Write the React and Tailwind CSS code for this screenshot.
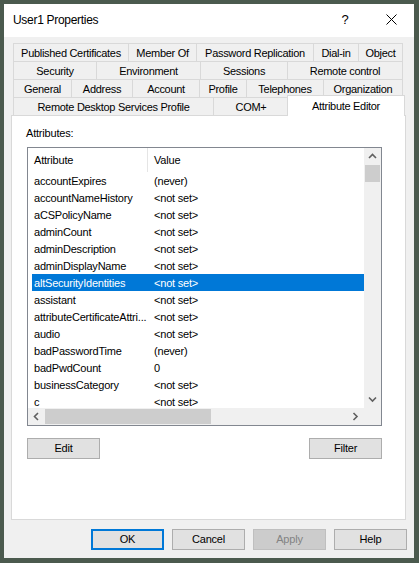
import React from "react";

const font = { fontFamily: '"Liberation Sans", Arial, sans-serif' };

const tabRows = [
    [
        { label: "Published Certificates", w: "w-[116px]" },
        { label: "Member Of", w: "w-[68px]" },
        { label: "Password Replication", w: "w-[117px]" },
        { label: "Dial-in", w: "w-[45px]" },
        { label: "Object", w: "w-[44px]" },
    ],
    [
        { label: "Security", w: "w-[84px]" },
        { label: "Environment", w: "w-[104px]" },
        { label: "Sessions", w: "w-[87px]" },
        { label: "Remote control", w: "w-[115px]" },
    ],
    [
        { label: "General", w: "w-[59px]" },
        { label: "Address", w: "w-[61px]" },
        { label: "Account", w: "w-[67px]" },
        { label: "Profile", w: "w-[47px]" },
        { label: "Telephones", w: "w-[77px]" },
        { label: "Organization", w: "w-[79px]" },
    ],
];

const attributes = [
    ["accountExpires", "(never)"],
    ["accountNameHistory", "<not set>"],
    ["aCSPolicyName", "<not set>"],
    ["adminCount", "<not set>"],
    ["adminDescription", "<not set>"],
    ["adminDisplayName", "<not set>"],
    ["altSecurityIdentities", "<not set>"],
    ["assistant", "<not set>"],
    ["attributeCertificateAttri...", "<not set>"],
    ["audio", "<not set>"],
    ["badPasswordTime", "(never)"],
    ["badPwdCount", "0"],
    ["businessCategory", "<not set>"],
    ["c", "<not set>"],
];

function Chevron({ dir }) {
    const d = {
        up: "M1 5 L4.5 1.5 L8 5",
        down: "M1 1.5 L4.5 5 L8 1.5",
        left: "M5 1 L1.5 4.5 L5 8",
        right: "M1.5 1 L5 4.5 L1.5 8",
    }[dir];
    const vertical = dir === "up" || dir === "down";
    return (
        <svg width={vertical ? 9 : 7} height={vertical ? 7 : 9} viewBox={vertical ? "0 0 9 7" : "0 0 7 9"}>
            <path d={d} fill="none" stroke="#606060" strokeWidth="1.6" />
        </svg>
    );
}

function Btn({ children, variant }) {
    let cls = "bg-[#e1e1e1] border border-[#adadad] text-black";
    if (variant === "default") cls = "bg-[#e1e1e1] border-2 border-[#0078d7] text-black";
    if (variant === "disabled") cls = "bg-[#cccccc] border border-[#bfbfbf] text-[#838383]";
    return (
        <div className={`w-[73px] h-[21px] flex items-center justify-center text-[11px] tracking-[-0.2px] ${cls}`}>
            {children}
        </div>
    );
}

export default function App() {
    return (
        <div className="w-[419px] h-[563px] bg-[#4b5a4e] pl-[4px] pt-[4px] pr-[5px] pb-[5px]" style={font}>
            <div className="w-[410px] h-[554px] bg-[#f0f0f0] flex flex-col">

                {/* title bar */}
                <div className="h-[33px] bg-white flex items-center pb-[2px]">
                    <span className="flex-1 pl-[9px] text-[12px] tracking-[-0.3px] text-black">User1 Properties</span>
                    <span className="w-[46px] text-center text-[13px] text-black">?</span>
                    <span className="w-[46px] flex justify-center">
                        <svg width="11" height="11" viewBox="0 0 11 11">
                            <path d="M0.5 0.5 L10.5 10.5 M10.5 0.5 L0.5 10.5" stroke="#000" strokeWidth="1" />
                        </svg>
                    </span>
                </div>

                {/* tabs */}
                <div className="mt-[6px] ml-[9px] flex flex-col text-[11px] tracking-[-0.3px] text-black">
                    {tabRows.map((row, i) => (
                        <div key={i} className="flex h-[18px]">
                            {row.map((t) => (
                                <div
                                    key={t.label}
                                    className={`${t.w} flex items-center justify-center pt-px border-t border-r border-[#d9d9d9] first:border-l whitespace-nowrap`}
                                >
                                    {t.label}
                                </div>
                            ))}
                        </div>
                    ))}
                    <div className="flex h-[18px] items-end">
                        <div className="w-[201px] h-[18px] flex items-center justify-center pt-px border-t border-l border-r border-[#d9d9d9]">
                            Remote Desktop Services Profile
                        </div>
                        <div className="w-[75px] h-[18px] flex items-center justify-center pt-px border-t border-r border-[#d9d9d9]">
                            COM+
                        </div>
                        <div className="relative z-10 w-[118px] h-[21px] -ml-[2px] -mb-px bg-white flex items-start pt-[2px] justify-center border-t border-l border-r border-[#d9d9d9]">
                            Attribute Editor
                        </div>
                    </div>
                </div>

                {/* tab page */}
                <div className="ml-[7px] w-[395px] h-[405px] bg-white border border-[#d9d9d9] pl-[15px] pt-[10px] flex flex-col text-[11px] tracking-[-0.2px] text-black">
                    <div className="h-[14px] flex items-center -ml-px">Attributes:</div>

                    <div className="mt-[7px] w-[355px] h-[279px] border border-[#828790] flex flex-col">
                        <div className="flex h-[260px]">
                            <div className="w-[336px] overflow-hidden">
                                <div className="h-[24px] flex">
                                    <div className="w-[120px] pl-[6px] pt-px flex items-center border-r border-[#e5e5e5]">Attribute</div>
                                    <div className="pl-[6px] pt-px flex items-center">Value</div>
                                </div>
                                {attributes.map(([name, value], i) => (
                                    <div
                                        key={name}
                                        className={`ml-[4px] w-[332px] h-[17px] pt-px flex items-center whitespace-nowrap ${i === 6 ? "bg-[#0078d7] text-white" : ""}`}
                                    >
                                        <span className="w-[120px] pl-[2px]">{name}</span>
                                        <span className="pl-[2px]">{value}</span>
                                    </div>
                                ))}
                            </div>
                            <div className="w-[17px] bg-[#f0f0f0] flex flex-col">
                                <div className="h-[17px] flex items-center justify-center">
                                    <Chevron dir="up" />
                                </div>
                                <div className="mx-px h-[17px] bg-[#cdcdcd]" />
                                <div className="flex-1" />
                                <div className="h-[17px] flex items-center justify-center">
                                    <Chevron dir="down" />
                                </div>
                            </div>
                        </div>
                        <div className="flex h-[17px]">
                            <div className="w-[336px] bg-[#f0f0f0] flex items-center">
                                <div className="w-[17px] h-[17px] flex items-center justify-center">
                                    <Chevron dir="left" />
                                </div>
                                <div className="w-[166px] h-[15px] bg-[#cdcdcd]" />
                                <div className="flex-1" />
                                <div className="w-[17px] h-[17px] flex items-center justify-center">
                                    <Chevron dir="right" />
                                </div>
                            </div>
                            <div className="w-[17px] bg-[#f0f0f0]" />
                        </div>
                    </div>

                    <div className="mt-[12px] w-[355px] flex justify-between">
                        <Btn>Edit</Btn>
                        <Btn>Filter</Btn>
                    </div>
                </div>

                {/* dialog buttons */}
                <div className="mt-[9px] pr-[7px] flex justify-end gap-[8px]">
                    <Btn variant="default">OK</Btn>
                    <Btn>Cancel</Btn>
                    <Btn variant="disabled">Apply</Btn>
                    <Btn>Help</Btn>
                </div>
            </div>
        </div>
    );
}
